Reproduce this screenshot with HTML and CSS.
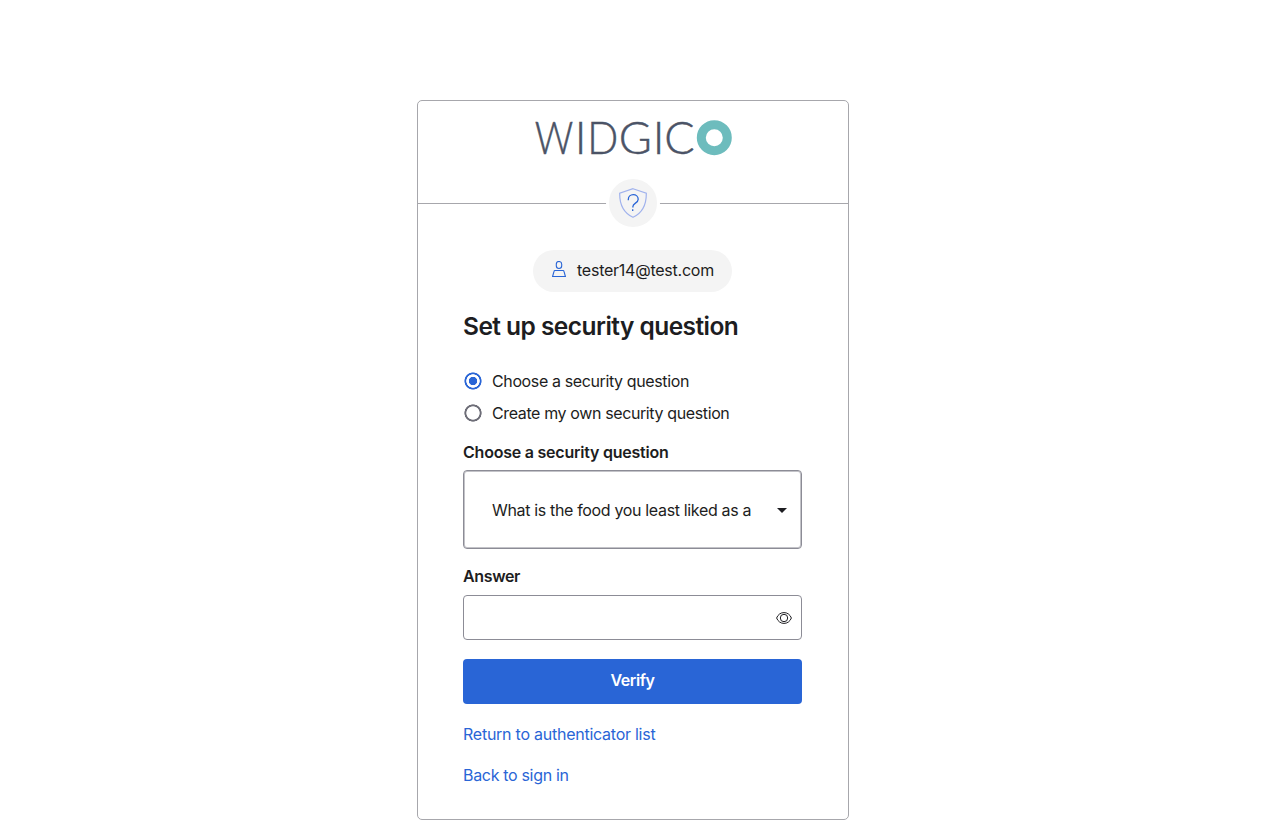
FILE: index.html
```html
<!DOCTYPE html>
<html lang="en">
<head>
<meta charset="utf-8">
<title>Widgico - Set up security question</title>
<link rel="stylesheet" href="styles.css">
</head>
<body>
<main class="card">
  <header class="card-header">
    <svg class="logo" width="200" height="62" viewBox="533 104 200 62" role="img" aria-label="WIDGICO">
      <g class="logo-text">
        <text x="534.8" y="153.800" textLength="38.500" lengthAdjust="spacingAndGlyphs">W</text>
        <text x="574.8" y="153.800">I</text>
        <text x="587.3" y="153.800" textLength="31" lengthAdjust="spacingAndGlyphs">D</text>
        <text x="618.700 652.700 664.200" y="153.800">GIC</text>
      </g>
      <circle cx="714.3" cy="137.7" r="13" fill="none" stroke="#6dbcbd" stroke-width="9"/>
    </svg>
    <div class="beacon">
      <svg width="28" height="30" viewBox="0 0 28 30" fill="none">
        <path d="M14 .7 27.3 5.2C27.5 17.500 23 25 14 29.300 5 25 .5 17.500 .7 5.200Z" stroke="#a0b2ed" stroke-width="1.200"/>
        <path d="M9.300 12.200V11.500C9.300 8.700 11.500 6.700 14.200 6.700C17 6.700 19.200 8.700 19.200 11.300C19.200 15.200 13.900 15 13.900 18.500V19.500M13.700 21.300V23" stroke="#2965d6" stroke-width="1.300"/>
      </svg>
    </div>
  </header>
  <div class="content">
    <div class="identifier">
      <svg width="14" height="16" viewBox="0 0 14 16" fill="none" stroke="#2965d6" stroke-width="1.100">
        <rect x="4.300" y=".5" width="5.400" height="7" rx="2.700"/>
        <path d="M.6 15.500 2 10.400Q2.200 9.500 3 9.500H11Q11.800 9.500 12 10.400L13.400 15.500Z"/>
      </svg>
      <span>tester14@test.com</span>
    </div>
    <h1 class="title">Set up security question</h1>
    <div class="options">
      <label class="option"><input class="radio" type="radio" name="mode" checked><span>Choose a security question</span></label>
      <label class="option"><input class="radio" type="radio" name="mode"><span>Create my own security question</span></label>
    </div>
    <div class="label label-question">Choose a security question</div>
    <div class="select" role="combobox" tabindex="0">
      <span>What is the food you least liked as a</span>
      <svg width="10" height="5" viewBox="0 0 10 5"><path d="M0 0H10L5 5Z" fill="#1d1d21"/></svg>
    </div>
    <label class="label label-answer" for="answer">Answer</label>
    <div class="field">
      <input id="answer" class="input" type="password">
      <svg width="16" height="12" viewBox="0 0 16 12" fill="none" stroke="#1d1d21">
        <path d="M.6 6C2 2.500 4.700.6 8 .6S14 2.500 15.400 6C14 9.500 11.300 11.400 8 11.400S2 9.500 .6 6Z"/>
        <circle cx="8" cy="6" r="3.700"/>
      </svg>
    </div>
    <button class="button" type="button">Verify</button>
    <a class="link link-return">Return to authenticator list</a>
    <a class="link link-back">Back to sign in</a>
  </div>
</main>
</body>
</html>
```

FILE: styles.css
```css
* { box-sizing: border-box; }
body {
  margin: 0;
  padding-top: 100px;
  background: #fff;
  color: #1d1d21;
  font: 16px/24px Inter, "Liberation Sans", sans-serif;
}
svg { display: block; flex: none; }
.card {
  width: 432px;
  height: 720px;
  margin: 0 auto 0 417px;
  border: 1px solid #a7a7ac;
  border-radius: 5px;
}
.card-header {
  position: relative;
  height: 103px;
  padding: 3px 0 0 115px;
  border-bottom: 1px solid #a7a7ac;
}
.logo-text {
  font-family: Lato, sans-serif;
  font-weight: 300;
  font-size: 45px;
  fill: #4b5366;
  stroke: #4b5366;
  stroke-width: .5px;
}
.beacon {
  position: absolute;
  left: 188px;
  top: 75px;
  width: 54px;
  height: 54px;
  border: 3px solid #fff;
  border-radius: 50%;
  background: #f4f4f4;
  display: grid;
  place-items: center;
}
.content {
  display: flex;
  flex-direction: column;
  padding: 46px 46px 0 45px;
}
.identifier {
  align-self: center;
  display: flex;
  align-items: center;
  gap: 11px;
  width: 199px;
  height: 42px;
  padding: 0 0 2px 19px;
  border-radius: 21px;
  background: #f4f4f4;
  letter-spacing: -.24px;
}
.identifier svg { margin-top: -2px; }
.title {
  margin: 18px 0 0;
  font-size: 24.5px;
  line-height: 32px;
  font-weight: 600;
  letter-spacing: -.54px;
}
.options {
  display: grid;
  gap: 8px;
  margin-top: 27px;
  letter-spacing: -.38px;
}
.option { display: flex; align-items: center; gap: 10px; }
.radio {
  appearance: none;
  flex: none;
  width: 18px;
  height: 18px;
  margin: 0 0 0 1px;
  background: radial-gradient(circle, transparent 6.3px, #6e6e78 7px, #6e6e78 8.3px, transparent 8.9px);
}
.radio:checked {
  background: radial-gradient(circle, #2965d6 3.8px, transparent 4.5px, transparent 6.4px, #2965d6 7px, #2965d6 8.2px, transparent 8.9px);
}
.label { font-weight: 600; letter-spacing: -.23px; }
.label-question { margin-top: 15px; }
.select {
  display: flex;
  align-items: center;
  justify-content: space-between;
  height: 79px;
  margin-top: 6px;
  padding: 0 14px 0 28px;
  border: 1px solid #8c8c96;
  box-shadow: inset 0 0 0 1px #c3c3c8;
  border-radius: 4px;
  letter-spacing: -.34px;
}
.select svg { margin-top: 2px; }
.label-answer { margin-top: 15px; letter-spacing: -.35px; }
.field {
  display: flex;
  align-items: center;
  height: 45px;
  margin-top: 7px;
  padding-right: 9px;
  border: 1px solid #8c8c96;
  border-radius: 4px;
}
.input {
  flex: 1;
  min-width: 0;
  height: 100%;
  padding: 0 12px;
  border: 0;
  outline: 0;
  background: transparent;
}
.button {
  height: 45px;
  margin-top: 19px;
  padding: 0 0 3px;
  border: 0;
  border-radius: 4px;
  background: #2965d6;
  color: #fff;
  font: inherit;
  font-weight: 600;
  letter-spacing: -.45px;
}
.link { align-self: flex-start; color: #2965d6; letter-spacing: -.25px; }
.link-return { margin-top: 18px; }
.link-back { margin-top: 17px; letter-spacing: -.32px; }
```
